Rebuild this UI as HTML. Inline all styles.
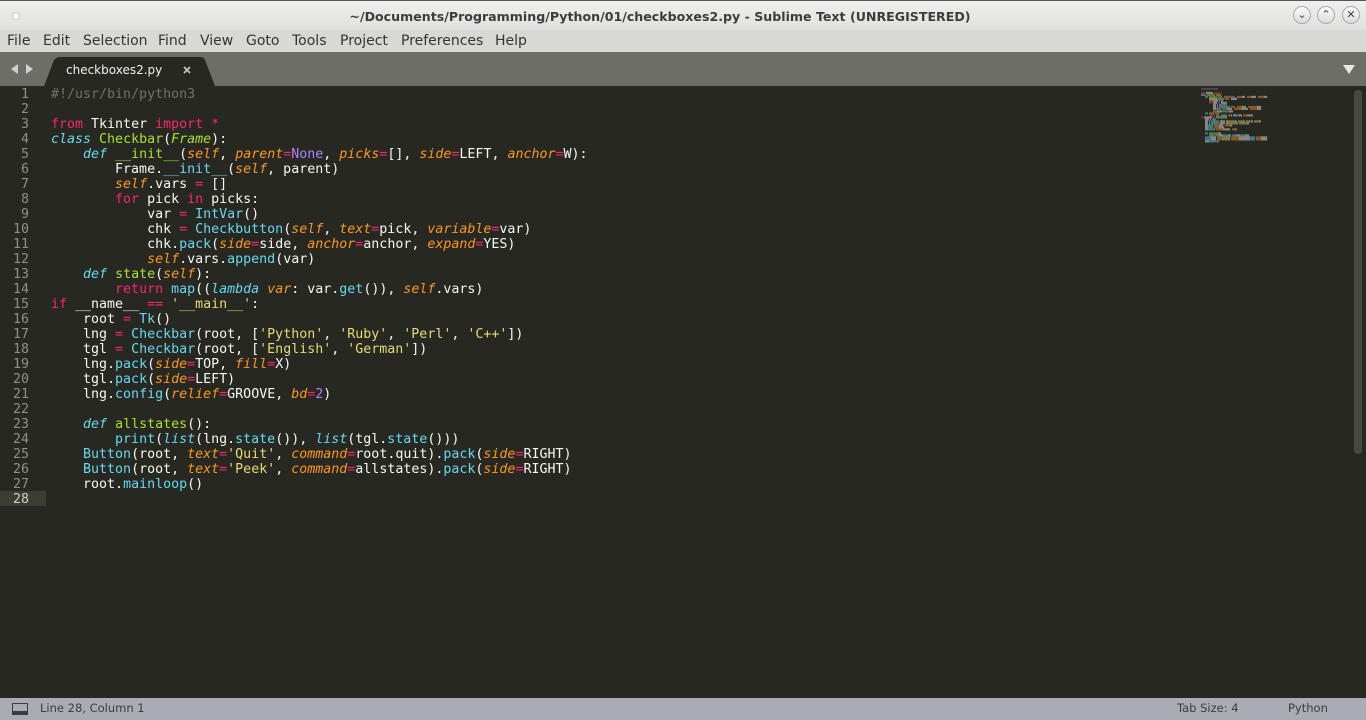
<!DOCTYPE html>
<html><head><meta charset="utf-8"><style>
*{margin:0;padding:0;box-sizing:border-box}
body{width:1366px;height:720px;overflow:hidden;background:#272822;font-family:"Liberation Sans","DejaVu Sans",sans-serif;position:relative}
#title{position:absolute;left:0;top:0;width:1366px;height:30px;background:linear-gradient(#efefee,#e0e0df);border-top:1px solid #555}
#title .t{position:absolute;left:0;right:46px;top:8px;text-align:center;font-family:"DejaVu Sans",sans-serif;font-size:12.6px;font-weight:bold;color:#3c3c3c}
.dot{position:absolute;left:12px;top:11px;width:8px;height:8px;border-radius:50%;background:#f8f8f8;border:1px solid #ccc}
.wb{position:absolute;top:5px;width:18px;height:18px;border-radius:50%;border:1px solid #aaa;background:linear-gradient(#fafafa,#dcdcdc);font-size:11px;line-height:16px;text-align:center;color:#444;font-family:"DejaVu Sans",sans-serif}
#menu{position:absolute;left:0;top:30px;width:1366px;height:22px;background:#d8d8d7;font-family:"DejaVu Sans",sans-serif;font-size:14px;color:#333}
#menu span{position:absolute;top:3px}
#tabs{position:absolute;left:0;top:52px;width:1366px;height:34px;background:#6e6e69}
#code,#gut{position:absolute;top:87px;font-family:"DejaVu Sans Mono",monospace;font-size:13.3px;line-height:15px;white-space:pre}
#gut{left:0;width:46px;text-align:right;color:#8f908a}
#gut div{padding-right:17px}
#code{left:51px;color:#f8f8f2}
.k{color:#f92672}.f{color:#a6e22e}.s{color:#66d9ef;font-style:italic}.b{color:#66d9ef}.p{color:#fd971f;font-style:italic}.c{color:#ae81ff}.t{color:#e6db74}.m{color:#75715e}.fi{color:#a6e22e;font-style:italic}
#status{position:absolute;left:0;top:698px;width:1366px;height:22px;background:#a9adb3;font-family:"DejaVu Sans",sans-serif;font-size:11.5px;color:#3a3d42}
#status span{position:absolute;top:3px}
#mini{position:absolute;left:1201px;top:88px;transform:scale(0.125,0.135);transform-origin:0 0;font-family:"DejaVu Sans Mono",monospace;font-size:13.3px;line-height:15px;white-space:pre;color:#f8f8f2;opacity:0.45}
</style></head><body>
<div id="title"><div class="dot"></div><div class="t">~/Documents/Programming/Python/01/checkboxes2.py - Sublime Text (UNREGISTERED)</div>
<div class="wb" style="left:1293px">&#8964;</div><div class="wb" style="left:1317px">&#8963;</div><div class="wb" style="left:1342px">✕</div></div>
<div id="menu"><span style="left:7px">File</span><span style="left:43px">Edit</span><span style="left:83px">Selection</span><span style="left:158px">Find</span><span style="left:200px">View</span><span style="left:246px">Goto</span><span style="left:292px">Tools</span><span style="left:340px">Project</span><span style="left:401px">Preferences</span><span style="left:495px">Help</span></div>
<div id="tabs">
<svg width="1366" height="34" style="position:absolute;left:0;top:0">
<polygon points="11,17 18,12 18,22" fill="#d0d0cc"/><polygon points="33,17 26,12 26,22" fill="#d0d0cc"/>
<path d="M44,34 L54,8 Q56,5 60,5 L200,5 Q204,5 205,8 L215,34 Z" fill="#272822"/>
<polygon points="1343,13 1355,13 1349,22" fill="#e8e8e8"/>
<path d="M184,15 l6,6 M190,15 l-6,6" stroke="#c8c8c4" stroke-width="1.6"/>
</svg>
<span style="position:absolute;left:66px;top:11px;font-family:'DejaVu Sans',sans-serif;font-size:12px;color:#f0f0ec">checkboxes2.py</span>
</div>
<div style="position:absolute;left:0;top:491px;width:46px;height:15px;background:#3e3d32"></div>
<div style="position:absolute;left:1354px;top:90px;width:8px;height:364px;border-radius:4px;background:#48483f"></div>
<div id="gut"><div>1</div><div>2</div><div>3</div><div>4</div><div>5</div><div>6</div><div>7</div><div>8</div><div>9</div><div>10</div><div>11</div><div>12</div><div>13</div><div>14</div><div>15</div><div>16</div><div>17</div><div>18</div><div>19</div><div>20</div><div>21</div><div>22</div><div>23</div><div>24</div><div>25</div><div>26</div><div>27</div><div style="color:#d0d0c8">28</div></div>
<div id="code"><span class="m">#!/usr/bin/python3</span>

<span class="k">from</span> Tkinter <span class="k">import</span> <span class="k">*</span>
<span class="s">class</span> <span class="f">Checkbar</span>(<span class="fi">Frame</span>):
    <span class="s">def</span> <span class="f">__init__</span>(<span class="p">self</span>, <span class="p">parent</span><span class="k">=</span><span class="c">None</span>, <span class="p">picks</span><span class="k">=</span>[], <span class="p">side</span><span class="k">=</span>LEFT, <span class="p">anchor</span><span class="k">=</span>W):
        Frame.<span class="b">__init__</span>(<span class="p">self</span>, parent)
        <span class="p">self</span>.vars <span class="k">=</span> []
        <span class="k">for</span> pick <span class="k">in</span> picks:
            var <span class="k">=</span> <span class="b">IntVar</span>()
            chk <span class="k">=</span> <span class="b">Checkbutton</span>(<span class="p">self</span>, <span class="p">text</span><span class="k">=</span>pick, <span class="p">variable</span><span class="k">=</span>var)
            chk.<span class="b">pack</span>(<span class="p">side</span><span class="k">=</span>side, <span class="p">anchor</span><span class="k">=</span>anchor, <span class="p">expand</span><span class="k">=</span>YES)
            <span class="p">self</span>.vars.<span class="b">append</span>(var)
    <span class="s">def</span> <span class="f">state</span>(<span class="p">self</span>):
        <span class="k">return</span> <span class="b">map</span>((<span class="s">lambda</span> <span class="p">var</span>: var.<span class="b">get</span>()), <span class="p">self</span>.vars)
<span class="k">if</span> __name__ <span class="k">==</span> <span class="t">'__main__'</span>:
    root <span class="k">=</span> <span class="b">Tk</span>()
    lng <span class="k">=</span> <span class="b">Checkbar</span>(root, [<span class="t">'Python'</span>, <span class="t">'Ruby'</span>, <span class="t">'Perl'</span>, <span class="t">'C++'</span>])
    tgl <span class="k">=</span> <span class="b">Checkbar</span>(root, [<span class="t">'English'</span>, <span class="t">'German'</span>])
    lng.<span class="b">pack</span>(<span class="p">side</span><span class="k">=</span>TOP, <span class="p">fill</span><span class="k">=</span>X)
    tgl.<span class="b">pack</span>(<span class="p">side</span><span class="k">=</span>LEFT)
    lng.<span class="b">config</span>(<span class="p">relief</span><span class="k">=</span>GROOVE, <span class="p">bd</span><span class="k">=</span><span class="c">2</span>)

    <span class="s">def</span> <span class="f">allstates</span>():
        <span class="b">print</span>(<span class="s">list</span>(lng.<span class="b">state</span>()), <span class="s">list</span>(tgl.<span class="b">state</span>()))
    <span class="b">Button</span>(root, <span class="p">text</span><span class="k">=</span><span class="t">'Quit'</span>, <span class="p">command</span><span class="k">=</span>root.quit).<span class="b">pack</span>(<span class="p">side</span><span class="k">=</span>RIGHT)
    <span class="b">Button</span>(root, <span class="p">text</span><span class="k">=</span><span class="t">'Peek'</span>, <span class="p">command</span><span class="k">=</span>allstates).<span class="b">pack</span>(<span class="p">side</span><span class="k">=</span>RIGHT)
    root.<span class="b">mainloop</span>()
</div>
<div id="mini"><span class="m">█████████████████</span>

<span class="k">████</span> ███████ <span class="k">██████</span> <span class="k">█</span>
<span class="s">█████</span> <span class="f">████████</span>(<span class="f">█████</span>):
    <span class="s">███</span> <span class="f">████████</span>(<span class="p">████</span>, <span class="p">██████</span><span class="c">█████</span>, <span class="p">█████</span>███, <span class="p">████</span>█████, <span class="p">██████</span>███):
        ████████<span class="b">███████</span>(<span class="p">████</span>, ██████)
        <span class="p">████</span>█████ █ ██
        <span class="k">███</span> ████ <span class="k">██</span> ██████
            ███ █ <span class="b">████████</span>
            ███ █ <span class="b">███████████</span>(<span class="p">████</span>, <span class="p">█████</span>████, <span class="p">█████████</span>████)
            ███<span class="b">█████</span>(<span class="p">█████</span>█████, <span class="p">███████</span>███████, <span class="p">███████</span>████)
            <span class="p">████</span>█████<span class="b">███████</span>████
    <span class="s">███</span> <span class="f">█████</span>(<span class="p">████</span>):
        <span class="k">██████</span> <span class="b">███</span>((<span class="s">██████</span> <span class="p">███</span>█ ███<span class="b">███</span>███ <span class="p">████</span>██████
<span class="k">██</span> ████████ <span class="k">██</span> <span class="t">██████████</span>█
    ████ █ <span class="b">████</span>
    ███ █ <span class="b">████████</span>(█████ ██<span class="t">████████</span>█ <span class="t">██████</span>█ <span class="t">██████</span>█ <span class="t">█████</span>██
    ███ █ <span class="b">████████</span>(█████ ██<span class="t">█████████</span>█ <span class="t">████████</span>██
    ███<span class="b">█████</span>(<span class="p">█████</span>████, <span class="p">█████</span>██)
    ███<span class="b">█████</span>(<span class="p">█████</span>█████)
    ███<span class="b">███████</span>(<span class="p">███████</span>███████, <span class="p">███</span>█<span class="c">█</span>)

    <span class="s">███</span> <span class="f">█████████</span>███
        <span class="b">█████</span>(<span class="s">████</span>████<span class="b">█████</span>███ <span class="s">████</span>████<span class="b">█████</span>████
    <span class="b">██████</span>█████ <span class="p">█████</span><span class="t">███████</span>█ <span class="p">████████</span>███████████<span class="b">█████</span>(<span class="p">█████</span>██████)
    <span class="b">██████</span>█████ <span class="p">█████</span><span class="t">███████</span>█ <span class="p">████████</span>███████████<span class="b">█████</span>(<span class="p">█████</span>██████)
    ████<span class="b">██████████</span>
</div>
<div id="status">
<svg width="18" height="12" style="position:absolute;left:12px;top:5px"><rect x="0.5" y="0.5" width="15" height="11" fill="none" stroke="#3a3d42"/><rect x="1" y="8" width="14" height="3" fill="#3a3d42"/></svg>
<span style="left:40px">Line 28, Column 1</span><span style="left:1177px">Tab Size: 4</span><span style="left:1288px">Python</span></div>
</body></html>
